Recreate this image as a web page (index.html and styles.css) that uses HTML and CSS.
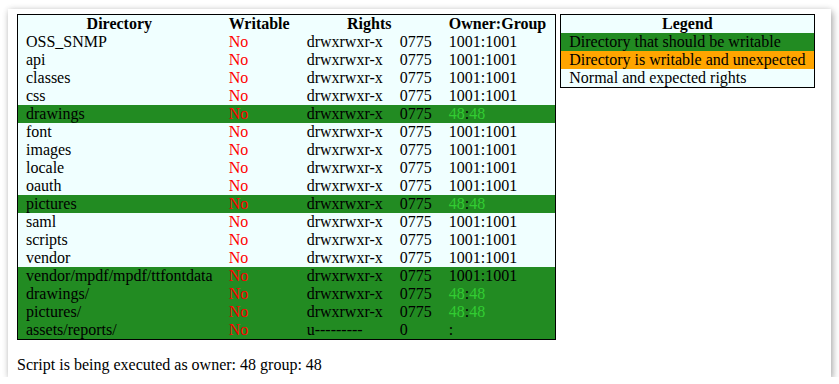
FILE: index.html
```html
<!DOCTYPE html>
<html>
<head>
<meta charset="utf-8">
<link rel="stylesheet" href="styles.css">
</head>
<body>
<div class="card">
  <div class="tables">
    <table class="dirs">
      <tr class="normal"><th>Directory</th><th>Writable</th><th colspan="2">Rights</th><th>Owner:Group</th></tr>
      <tr class="normal"><td>OSS_SNMP</td><td class="no">No</td><td>drwxrwxr-x</td><td>0775</td><td>1001:1001</td></tr>
      <tr class="normal"><td>api</td><td class="no">No</td><td>drwxrwxr-x</td><td>0775</td><td>1001:1001</td></tr>
      <tr class="normal"><td>classes</td><td class="no">No</td><td>drwxrwxr-x</td><td>0775</td><td>1001:1001</td></tr>
      <tr class="normal"><td>css</td><td class="no">No</td><td>drwxrwxr-x</td><td>0775</td><td>1001:1001</td></tr>
      <tr class="should"><td>drawings</td><td class="no">No</td><td>drwxrwxr-x</td><td>0775</td><td><span class="own">48</span>:<span class="own">48</span></td></tr>
      <tr class="normal"><td>font</td><td class="no">No</td><td>drwxrwxr-x</td><td>0775</td><td>1001:1001</td></tr>
      <tr class="normal"><td>images</td><td class="no">No</td><td>drwxrwxr-x</td><td>0775</td><td>1001:1001</td></tr>
      <tr class="normal"><td>locale</td><td class="no">No</td><td>drwxrwxr-x</td><td>0775</td><td>1001:1001</td></tr>
      <tr class="normal"><td>oauth</td><td class="no">No</td><td>drwxrwxr-x</td><td>0775</td><td>1001:1001</td></tr>
      <tr class="should"><td>pictures</td><td class="no">No</td><td>drwxrwxr-x</td><td>0775</td><td><span class="own">48</span>:<span class="own">48</span></td></tr>
      <tr class="normal"><td>saml</td><td class="no">No</td><td>drwxrwxr-x</td><td>0775</td><td>1001:1001</td></tr>
      <tr class="normal"><td>scripts</td><td class="no">No</td><td>drwxrwxr-x</td><td>0775</td><td>1001:1001</td></tr>
      <tr class="normal"><td>vendor</td><td class="no">No</td><td>drwxrwxr-x</td><td>0775</td><td>1001:1001</td></tr>
      <tr class="should"><td>vendor/mpdf/mpdf/ttfontdata</td><td class="no">No</td><td>drwxrwxr-x</td><td>0775</td><td>1001:1001</td></tr>
      <tr class="should"><td>drawings/</td><td class="no">No</td><td>drwxrwxr-x</td><td>0775</td><td><span class="own">48</span>:<span class="own">48</span></td></tr>
      <tr class="should"><td>pictures/</td><td class="no">No</td><td>drwxrwxr-x</td><td>0775</td><td><span class="own">48</span>:<span class="own">48</span></td></tr>
      <tr class="should"><td>assets/reports/</td><td class="no">No</td><td>u---------</td><td>0</td><td>:</td></tr>
    </table>
    <table class="legend">
      <tr class="normal"><th>Legend</th></tr>
      <tr class="should"><td>Directory that should be writable</td></tr>
      <tr class="unexpected"><td>Directory is writable and unexpected</td></tr>
      <tr class="normal"><td>Normal and expected rights</td></tr>
    </table>
  </div>
  <p class="note">Script is being executed as owner: 48 group: 48</p>
</div>
</body>
</html>
```
FILE: styles.css
```css
html, body {
  margin: 0;
  padding: 0;
  background: #ffffff;
}
body {
  font-family: "Liberation Serif", "Times New Roman", serif;
  font-size: 16px;
  color: #000;
}
.card {
  margin: 9px 0 0 8px;
  width: 823px;
  height: 368px;
  box-sizing: border-box;
  padding: 5px 9px 0 9px;
  background: #fff;
  box-shadow: 2px 3px 7px rgba(0, 0, 0, 0.28), 0 0 6px rgba(0, 0, 0, 0.12);
}
.tables {
  display: flex;
  align-items: flex-start;
  gap: 4px;
}
table {
  border: 1px solid #000;
  border-collapse: separate;
  border-spacing: 0;
  line-height: 18px;
}
th, td {
  padding: 0 8px;
  white-space: nowrap;
}
.dirs th + th,
.dirs td + td {
  padding-right: 9px;
}
th {
  font-weight: bold;
  text-align: center;
}
td {
  text-align: left;
}
.normal {
  background: #f0ffff;
}
.should {
  background: #228b22;
}
.unexpected {
  background: #ffa500;
}
.no {
  color: #ff0000;
}
.own {
  color: #32cd32;
}
.note {
  margin: 16px 0 0 0;
  line-height: 18px;
}
```
